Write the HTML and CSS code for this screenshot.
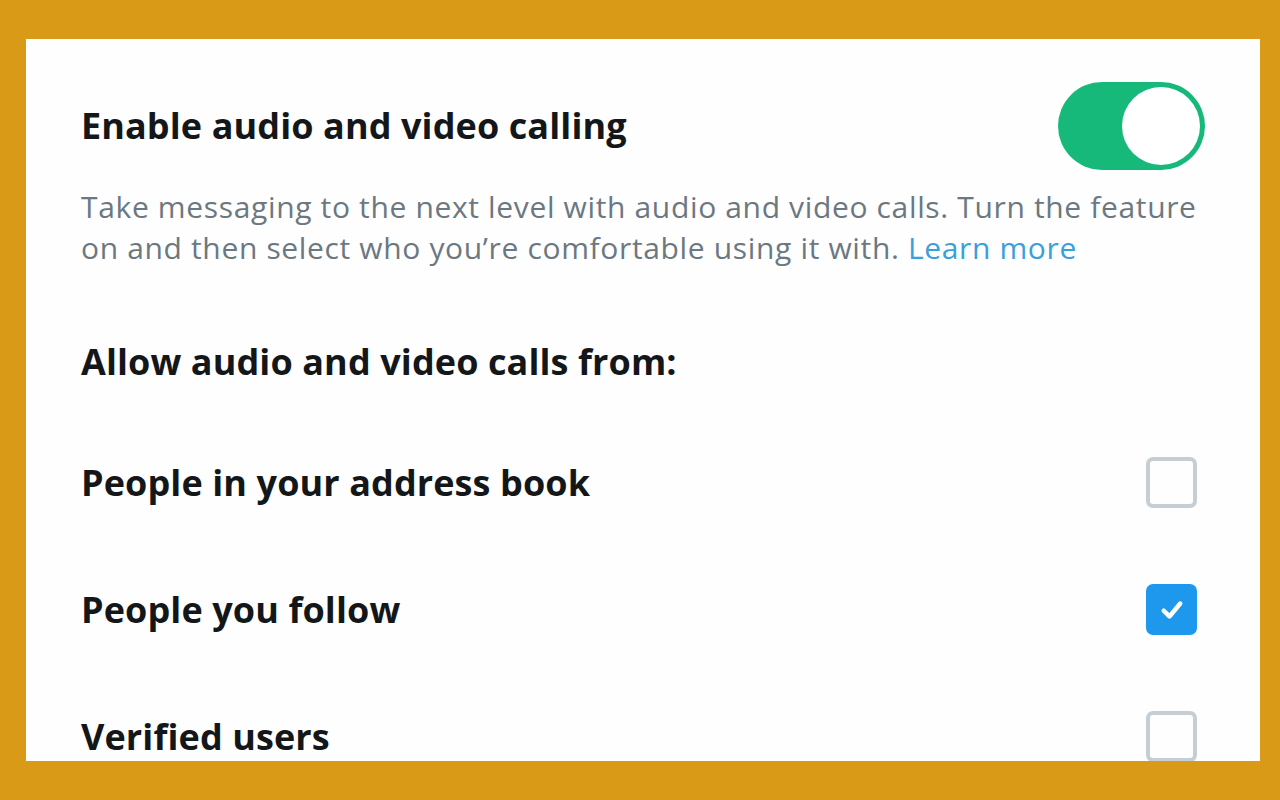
FILE: index.html
```html
<!DOCTYPE html>
<html lang="en">
<head>
<meta charset="utf-8">
<title>Audio and video calling</title>
<link rel="stylesheet" href="styles.css">
</head>
<body>
<main class="panel">
  <div class="toggle-row">
    <h2 class="title">Enable audio and video calling</h2>
    <div class="switch on"><span class="knob"></span></div>
  </div>
  <p class="desc">Take messaging to the next level with audio and video calls. Turn the feature<br>on and then select who you’re comfortable using it with. <a class="link" href="#">Learn more</a></p>
  <h3 class="section">Allow audio and video calls from:</h3>
  <div class="option first">
    <span class="label">People in your address book</span>
    <span class="box"></span>
  </div>
  <div class="option">
    <span class="label">People you follow</span>
    <span class="box checked"><svg viewBox="0 0 24 24" width="36" height="36"><path d="M6.5 12.5l3.8 3.8 7.2-8.6" fill="none" stroke="#fff" stroke-width="3" stroke-linecap="round" stroke-linejoin="round"/></svg></span>
  </div>
  <div class="option">
    <span class="label">Verified users</span>
    <span class="box"></span>
  </div>
</main>
</body>
</html>
```
FILE: styles.css
```css
html, body {
  margin: 0;
  height: 100%;
}
body {
  background: #d99a18;
  padding: 39px 20px 39px 26px;
  box-sizing: border-box;
  font-family: "Open Sans", "Noto Sans", sans-serif;
}
.panel {
  background: #fefefe;
  height: 722px;
  overflow: hidden;
  padding: 43px 55px 0 55px;
  box-sizing: border-box;
  display: flex;
  flex-direction: column;
}
.panel > * {
  flex-shrink: 0;
}
.toggle-row {
  display: flex;
  align-items: center;
  justify-content: space-between;
  height: 88px;
}
.title, .section, .label {
  margin: 0;
  font-size: 36px;
  font-weight: 700;
  color: #14171a;
  letter-spacing: 0.1px;
  line-height: 48px;
}
.label {
  line-height: 40px;
}
.switch {
  width: 147px;
  height: 88px;
  border-radius: 44px;
  background: #17b97b;
  display: flex;
  align-items: center;
  justify-content: flex-end;
  padding: 0 5px;
  box-sizing: border-box;
}
.knob {
  width: 78px;
  height: 78px;
  border-radius: 50%;
  background: #fff;
}
.desc {
  margin: 16px 0 0;
  font-size: 30px;
  line-height: 41px;
  letter-spacing: 0.65px;
  color: #6c7881;
  white-space: nowrap;
}
.link {
  color: #3a9fdd;
  text-decoration: none;
}
.section {
  margin-top: 70px;
}
.option {
  display: flex;
  align-items: center;
  justify-content: space-between;
  height: 127px;
  padding-right: 8px;
}
.option.first {
  margin-top: 33px;
}
.box {
  width: 51px;
  height: 51px;
  border: 4px solid #c5ced4;
  border-radius: 7px;
  box-sizing: border-box;
  display: flex;
  align-items: center;
  justify-content: center;
}
.box.checked {
  background: #1e98ec;
  border-color: #1e98ec;
}
```
